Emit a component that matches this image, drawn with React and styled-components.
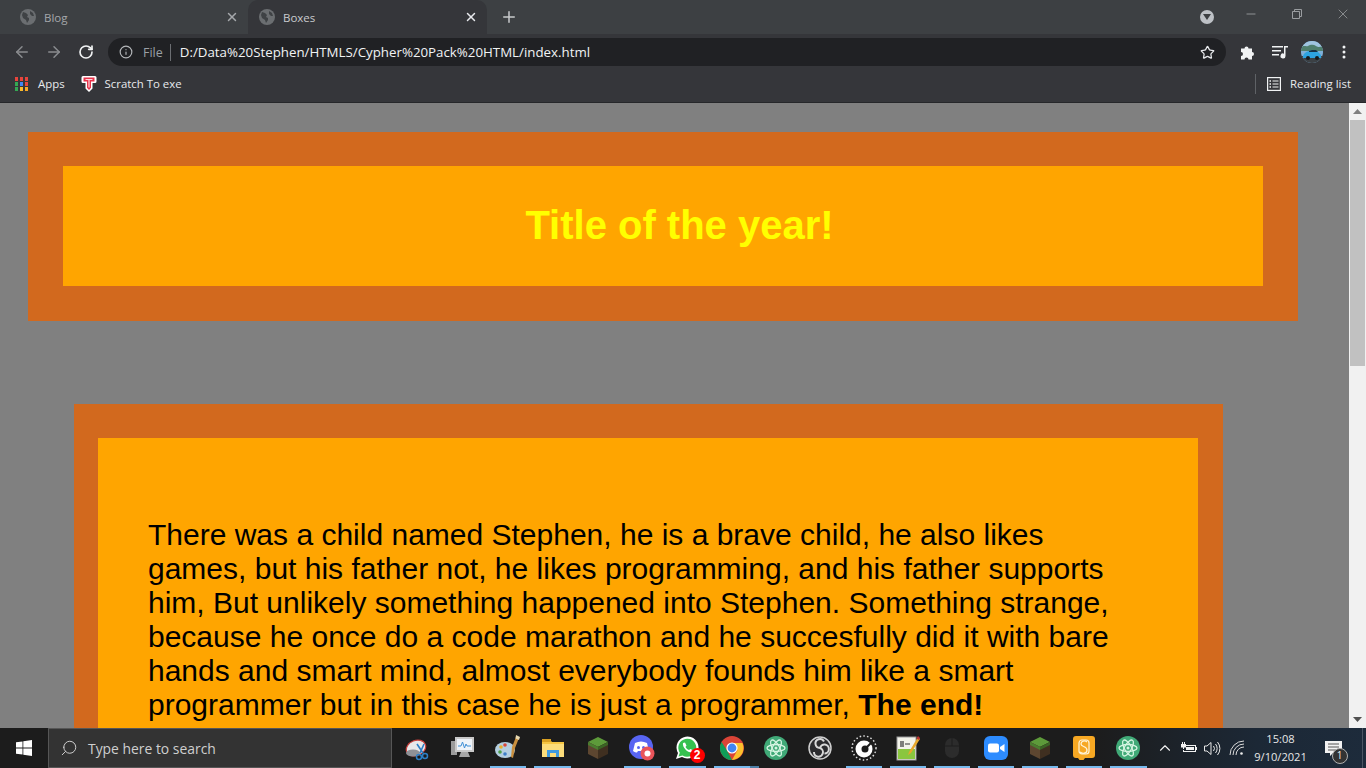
import React from 'react'
import styled, { createGlobalStyle } from 'styled-components'
import { ArrowLeft, ArrowRight, RotateCw, Star, Plus, X, Minus, Info, Search, ChevronUp } from 'lucide-react'

const Global = createGlobalStyle`
    html, body { margin: 0; padding: 0; height: 100%; overflow: hidden; }
    * { box-sizing: border-box; }
`

const Screen = styled.div`
    display: flex;
    flex-direction: column;
    width: 1366px;
    height: 768px;
    overflow: hidden;
    font-family: "Open Sans", "Noto Sans", sans-serif;
`

// browser chrome
const TabStrip = styled.div`
    display: flex;
    align-items: flex-end;
    height: 34px;
    background: #3d4043;
    flex-shrink: 0;
`

const Tab = styled.div`
    display: flex;
    align-items: center;
    width: ${p => p.$active ? 239 : 248}px;
    height: 34px;
    padding: ${p => p.$active ? '0 9px 0 11px' : '0 9px 0 20px'};
    gap: 8px;
    color: ${p => p.$active ? '#c9cbce' : '#a5a8ab'};
    background: ${p => p.$active ? '#35363a' : 'transparent'};
    border-radius: ${p => p.$active ? '10px 10px 0 0' : '0'};
    font-size: 11.5px;
`

const TabTitle = styled.span`
    flex: 1;
`

const NewTab = styled.div`
    display: flex;
    align-items: center;
    justify-content: center;
    width: 44px;
    height: 34px;
    color: #c8cacc;
`

const WindowControls = styled.div`
    display: flex;
    align-items: center;
    margin-left: auto;
    height: 34px;
    color: #9a9da0;
`

const ProfileDrop = styled.div`
    display: flex;
    align-items: center;
    justify-content: center;
    width: 14px;
    height: 14px;
    margin-right: 14px;
    border-radius: 50%;
    background: #bdc1c6;
`

const WinBtn = styled.div`
    display: flex;
    align-items: center;
    justify-content: center;
    width: 46px;
    height: 30px;
    margin-bottom: 6px;
`

const Toolbar = styled.div`
    display: flex;
    align-items: center;
    height: 34px;
    padding: 2px 0 0 6px;
    background: #35363a;
    flex-shrink: 0;
`

const NavBtn = styled.div`
    display: flex;
    align-items: center;
    justify-content: center;
    width: 32px;
    color: ${p => p.$on ? '#f1f3f4' : '#8a8c8f'};
`

const AddressBar = styled.div`
    display: flex;
    align-items: center;
    width: 1118px;
    height: 28px;
    margin-left: 6px;
    padding: 0 11px;
    border-radius: 14px;
    background: #202124;
    font-size: 13.3px;
`

const FileLabel = styled.span`
    margin-left: 10px;
    padding-right: 7px;
    color: #9aa0a6;
    border-right: 1px solid #6b6e72;
    font-size: 12.5px;
    line-height: 17px;
`

const Url = styled.span`
    flex: 1;
    margin-left: 9px;
    color: #f1f3f4;
`

const ToolIcons = styled.div`
    display: flex;
    align-items: center;
    padding-left: 6px;
    color: #f1f3f4;
`

const ToolSlot = styled.div`
    display: flex;
    align-items: center;
    justify-content: center;
    width: 32px;
`

const Avatar = styled.svg`
    display: block;
    border-radius: 50%;
`

const Bookmarks = styled.div`
    display: flex;
    align-items: center;
    height: 35px;
    padding: 0 0 3px 15px;
    background: #35363a;
    border-bottom: 1px solid #26272a;
    color: #e8eaed;
    font-size: 11.4px;
    flex-shrink: 0;
`

const Bookmark = styled.div`
    display: flex;
    align-items: center;
    gap: ${p => p.$gap}px;
    margin-right: 16px;
`

const ReadingList = styled.div`
    display: flex;
    align-items: center;
    gap: 9px;
    margin-left: auto;
    height: 20px;
    padding: 0 15px 0 11px;
    border-left: 1px solid #5f6266;
`

// page
const Viewport = styled.div`
    display: flex;
    flex: 1;
    min-height: 0;
`

const Page = styled.div`
    flex: 1;
    padding-top: 29px;
    overflow: hidden;
    background: #808080;
    font-family: "Liberation Sans", Arial, sans-serif;
`

const Header = styled.header`
    width: 1270px;
    margin-left: 28px;
    padding: 34px 35px 35px;
    background: #d2691e;
`

const TitleBox = styled.div`
    display: flex;
    align-items: center;
    justify-content: center;
    height: 120px;
    padding: 0 0 2px 33px;
    background: #ffa500;
`

const Title = styled.h1`
    margin: 0;
    color: #ffff00;
    font-size: 40px;
    font-weight: bold;
`

const Story = styled.section`
    width: 1149px;
    margin: 83px 0 0 74px;
    padding: 34px 25px 0 24px;
    background: #d2691e;
`

const StoryBox = styled.div`
    padding: 80px 50px 40px;
    background: #ffa500;
`

const StoryText = styled.p`
    margin: 0;
    color: #000;
    font-size: 30px;
    line-height: 34px;
`

const Scrollbar = styled.div`
    display: flex;
    flex-direction: column;
    align-items: center;
    width: 17px;
    background: #f1f1f1;
`

const ScrollArrow = styled.div`
    display: flex;
    align-items: center;
    justify-content: center;
    width: 17px;
    height: 17px;
    margin-top: ${p => p.$bottom ? 'auto' : '0'};
`

const ScrollThumb = styled.div`
    width: 15px;
    height: 246px;
    background: #c1c1c1;
`

// taskbar
const Taskbar = styled.footer`
    display: flex;
    align-items: center;
    height: 40px;
    background: linear-gradient(90deg, #1c1c1c 0%, #1c1c1c 80%, #1c2836 92%, #1d2b3b 100%);
    color: #fff;
    flex-shrink: 0;
`

const StartBtn = styled.div`
    display: flex;
    align-items: center;
    justify-content: center;
    width: 48px;
    height: 40px;
`

const SearchBox = styled.div`
    display: flex;
    align-items: center;
    gap: 10px;
    width: 344px;
    height: 40px;
    padding-left: 11px;
    background: #333;
    border: 1px solid #565656;
    color: #cfcfcf;
    font-size: 13.9px;
`

const Apps = styled.div`
    display: flex;
    margin-left: 4px;
    height: 40px;
`

const AppSlot = styled.div`
    position: relative;
    display: flex;
    align-items: center;
    justify-content: center;
    width: ${p => p.$wide ? 44.8 : 44.1}px;
    height: 40px;

    &::after {
        content: '';
        display: ${p => p.$running ? 'block' : 'none'};
        position: absolute;
        left: 4px;
        right: ${p => p.$stacked ? '-5px' : '4px'};
        bottom: 0;
        height: 2px;
        background: ${p => p.$stacked
            ? 'linear-gradient(90deg, #76b9ed 0, #76b9ed 36px, #4d7fa6 36px)'
            : '#76b9ed'};
    }
`

const Badge = styled.span`
    position: absolute;
    right: 5px;
    bottom: 5px;
    width: 15px;
    height: 15px;
    border-radius: 50%;
    background: #f00;
    color: #fff;
    font-family: "Liberation Sans", sans-serif;
    font-size: 12px;
    font-weight: bold;
    line-height: 15px;
    text-align: center;
`

const Tray = styled.div`
    display: flex;
    align-items: center;
    margin-left: 2px;
    color: #f2f2f2;
`

const TrayItem = styled.div`
    display: flex;
    align-items: center;
    justify-content: center;
    width: 24px;
`

const Clock = styled.div`
    width: 64px;
    color: #e8e8e8;
    font-size: 11.1px;
    line-height: 18px;
    text-align: center;
`

const Notify = styled.div`
    position: relative;
    display: flex;
    margin-left: 12px;
`

const NotifyCount = styled.span`
    position: absolute;
    left: 7px;
    top: 7px;
    width: 16px;
    height: 16px;
    border: 1.5px solid #b0b0b0;
    border-radius: 50%;
    background: #333;
    color: #eee;
    font-size: 10px;
    line-height: 13px;
    text-align: center;
`

const ShowDesktop = styled.div`
    width: 1px;
    height: 40px;
    margin-left: 20px;
    background: #4b5563;
`

const Globe = () => (
    <svg width="16" height="16" viewBox="0 0 16 16">
        <circle cx="8" cy="8" r="8" fill="#6b6e71" />
        <path d="M3 3l3 1 2 2-1 2 2 1 0 2-2 3-1-3-3-2-1-3zM10 2l3 2 1 3-2 0-2-2z" fill="#3f4245" />
    </svg>
)

const AppsGrid = () => {
    const colors = ['#e8453c', '#e8453c', '#e8453c', '#34a853', '#4285f4', '#e8453c', '#34a853', '#f9bb2d', '#f9a825']
    return (
        <svg width="13" height="14" viewBox="0 0 13 14">
            {colors.map((c, i) => (
                <rect key={i} x={(i % 3) * 5} y={Math.floor(i / 3) * 5} width="3" height="4" fill={c} />
            ))}
        </svg>
    )
}

const ScratchMark = () => (
    <svg width="16" height="18" viewBox="0 0 16 18">
        <path d="M2 1h12a1.500 1.500 0 0 1 1.500 1.500v4a1.500 1.500 0 0 1-1.500 1.500h-2.500v5.500L8 17l-3.500-3.500V8H2A1.500 1.500 0 0 1 .5 6.500v-4A1.500 1.500 0 0 1 2 1z" fill="#fff" />
        <path d="M2.500 2.500h11v4h-3.500v6.300L8 15l-2-2.200V6.500H2.500z" fill="#e8334a" />
        <path d="M4.500 4.500h7M8 4.500v8" stroke="#ffd4da" strokeWidth="1.200" fill="none" />
    </svg>
)

const Puzzle = () => (
    <svg width="16" height="16" viewBox="0 0 16 16" fill="currentColor">
        <path d="M1 4.500h3.500a2 2 0 1 1 4 0H12v3.500a2 2 0 1 1 0 4V15.500H8.500a2 2 0 1 0-4 0H1v-3.500a2 2 0 1 0 0-4z" />
    </svg>
)

const MediaQueue = () => (
    <svg width="16" height="14" viewBox="0 0 16 14" fill="currentColor">
        <rect x="0" y="1" width="11" height="1.500" />
        <rect x="0" y="5" width="9" height="1.500" />
        <rect x="0" y="9" width="7" height="1.500" />
        <path d="M12 1h4v1.500h-2.500V11a2.500 2.500 0 1 1-1.500-2.300z" />
    </svg>
)

const CarAvatar = () => (
    <Avatar width="22" height="22" viewBox="0 0 22 22">
        <rect width="22" height="22" fill="#7fb0d8" />
        <rect y="0" width="22" height="6" fill="#9fc4df" />
        <path d="M0 6c3-2 5 0 7-1s5-2 8 0 5 0 7 1v4H0z" fill="#4f7f6d" />
        <rect y="15" width="22" height="7" fill="#3b4044" />
        <path d="M2 15c1-3 3-4 6-5 3-1 7-1 9 1l3 3v3H2z" fill="#2da3e0" />
        <path d="M8 10l3-1h4l2 2H8z" fill="#173247" />
        <circle cx="7" cy="17" r="2" fill="#15191c" />
        <circle cx="16" cy="17" r="2" fill="#15191c" />
    </Avatar>
)

const ListIcon = () => (
    <svg width="14" height="14" viewBox="0 0 14 14" fill="none" stroke="#f1f3f4" strokeWidth="1.200">
        <rect x=".6" y=".6" width="12.800" height="12.800" />
        <path d="M5.500 4h6M5.500 7h6M5.500 10h6" />
        <path d="M2.500 4h1.500M2.500 7h1.500M2.500 10h1.500" strokeWidth="1.600" />
    </svg>
)

const RestoreIcon = () => (
    <svg width="10" height="10" viewBox="0 0 10 10" fill="none" stroke="currentColor">
        <path d="M.5 2.500h7v7h-7zM2.500 2.500v-2h7v7h-2" />
    </svg>
)

const WindowsLogo = () => (
    <svg width="16" height="16" viewBox="0 0 16 16" fill="#fff">
        <path d="M0 2.300l6.500-.9v6.200H0zM7.300 1.300L16 0v7.600H7.300zM0 8.400h6.500v6.200L0 13.700zM7.300 8.400H16V16l-8.700-1.200z" />
    </svg>
)

const SnipIcon = () => (
    <svg width="26" height="26" viewBox="0 0 26 26">
        <ellipse cx="11" cy="13" rx="10" ry="7.500" transform="rotate(-22 11 13)" fill="#e8e8ea" stroke="#c9403d" strokeWidth="1.200" />
        <ellipse cx="8" cy="18" rx="7" ry="3.500" fill="#8f9196" />
        <path d="M12 9l6 9M19 9l-4 9" stroke="#2d7fc6" strokeWidth="1.600" />
        <circle cx="20" cy="21" r="2.500" fill="none" stroke="#2d7fc6" strokeWidth="1.500" />
        <circle cx="14" cy="22" r="2.500" fill="none" stroke="#2d7fc6" strokeWidth="1.500" />
    </svg>
)

const MonitorIcon = () => (
    <svg width="24" height="24" viewBox="0 0 24 24">
        <rect x="0" y="5" width="6" height="14" fill="#9c9c9c" />
        <rect x="4" y="1" width="19" height="15" fill="#c9c9c9" />
        <rect x="6" y="3" width="15" height="11" fill="#eef3f8" />
        <path d="M7 10l3 0 1.500-4 2 6 1.500-4 1 2h4" fill="none" stroke="#3f8fd6" strokeWidth="1" />
        <path d="M10 16h7l2 5H8z" fill="#a6a6a6" />
    </svg>
)

const PaintIcon = () => (
    <svg width="26" height="26" viewBox="0 0 26 26">
        <ellipse cx="10" cy="15" rx="10" ry="8" fill="#b4cfe0" />
        <circle cx="6" cy="12" r="1.800" fill="#e8b02c" />
        <circle cx="10" cy="10" r="1.800" fill="#d8473c" />
        <circle cx="5" cy="17" r="1.800" fill="#4f9e4a" />
        <circle cx="10" cy="19" r="1.800" fill="#3d7fc9" />
        <path d="M21 2l3 1-4 10-2 10-2-1 1-10z" fill="#c98f3e" />
        <path d="M21 0l4 2-1 3-3.500-1.500z" fill="#e8d9b0" />
    </svg>
)

const FolderIcon = () => (
    <svg width="24" height="22" viewBox="0 0 24 22">
        <path d="M1 3h8l2 2h12v15H1z" fill="#f5c542" />
        <rect x="1" y="2" width="9" height="3" fill="#d9a021" />
        <rect x="1" y="7" width="22" height="13" fill="#fbdc7a" />
        <path d="M6 20v-7h12v7h-3v-4H9v4z" fill="#3f9ae0" />
    </svg>
)

const GrassBlock = () => (
    <svg width="24" height="24" viewBox="0 0 24 24">
        <path d="M12 1l10 5-10 5L2 6z" fill="#5d9a3a" />
        <path d="M2 6l10 5v12L2 18z" fill="#5d4630" />
        <path d="M22 6l-10 5v12l10-5z" fill="#3f2f20" />
        <path d="M2 6l10 5v3L2 9z" fill="#4a7d2f" />
        <path d="M22 6l-10 5v3l10-5z" fill="#3a6324" />
    </svg>
)

const DiscordIcon = () => (
    <svg width="26" height="26" viewBox="0 0 26 26">
        <circle cx="12" cy="12" r="12" fill="#5865f2" />
        <path d="M6 8c4-2 8-2 12 0l2 8c-1.500 1-3 1.500-4 1.500l-1-1.500H9l-1 1.500C7 17.500 5.500 17 4 16z" fill="#fff" />
        <circle cx="9.500" cy="12.500" r="1.500" fill="#5865f2" />
        <circle cx="14.500" cy="12.500" r="1.500" fill="#5865f2" />
        <circle cx="18.500" cy="18.500" r="7" fill="#e9545a" />
        <circle cx="18.500" cy="18.500" r="3" fill="#fff" />
    </svg>
)

const WhatsappIcon = () => (
    <svg width="24" height="24" viewBox="0 0 24 24">
        <path d="M1 23l2-6a11 11 0 1 1 4 4z" fill="#fff" />
        <path d="M3.500 20.500l1.300-3.800a9 9 0 1 1 2.800 2.700z" fill="#35c14f" />
        <path d="M8 7l2-.5 1.500 3-1 1.500c1 1.500 2 2.500 3.500 3l1.500-1 3 1.500-.5 2c-5 1-11-5-10-9.500z" fill="#fff" />
    </svg>
)

const ChromeIcon = () => (
    <svg width="24" height="24" viewBox="0 0 24 24">
        <circle cx="12" cy="12" r="12" fill="#db4437" />
        <path d="M12 24A12 12 0 0 1 1.600 6L7 14.500 12 24z" fill="#0f9d58" />
        <path d="M12 24l5.500-10L12 7h10.400A12 12 0 0 1 12 24z" fill="#fbc02d" />
        <circle cx="12" cy="12" r="5.600" fill="#fff" />
        <circle cx="12" cy="12" r="4.400" fill="#4285f4" />
    </svg>
)

const AtomIcon = () => (
    <svg width="24" height="24" viewBox="0 0 24 24">
        <circle cx="12" cy="12" r="12" fill="#40a977" />
        <g fill="none" stroke="#d5f5e2" strokeWidth="1.300">
            <ellipse cx="12" cy="12" rx="9" ry="3.500" />
            <ellipse cx="12" cy="12" rx="9" ry="3.500" transform="rotate(60 12 12)" />
            <ellipse cx="12" cy="12" rx="9" ry="3.500" transform="rotate(120 12 12)" />
        </g>
        <circle cx="12" cy="12" r="1.500" fill="#d5f5e2" />
    </svg>
)

const ObsIcon = () => (
    <svg width="24" height="24" viewBox="0 0 24 24">
        <circle cx="12" cy="12" r="11" fill="#2b2b2e" stroke="#cfcfcf" strokeWidth="1.500" />
        <g fill="none" stroke="#d8d8d8" strokeWidth="2">
            <path d="M12 12a4.500 4.500 0 1 1 4-6.500" />
            <path d="M12 12a4.500 4.500 0 1 1-6 4" />
            <path d="M12 12a4.500 4.500 0 1 1 4.500 5.500" />
        </g>
    </svg>
)

const DialIcon = () => (
    <svg width="26" height="26" viewBox="0 0 26 26">
        <circle cx="13" cy="13" r="12" fill="none" stroke="#ddd" strokeWidth="1.500" strokeDasharray="1.500 2.200" />
        <circle cx="13" cy="14" r="8.500" fill="#fff" />
        <circle cx="14" cy="14" r="3.500" fill="#1c1c1c" />
        <path d="M14 14l7-7" stroke="#1c1c1c" strokeWidth="2" />
    </svg>
)

const NotepadIcon = () => (
    <svg width="24" height="26" viewBox="0 0 24 26">
        <rect x="1" y="2" width="19" height="23" fill="#f3f3ea" stroke="#9a9a9a" />
        <rect x="2" y="14" width="17" height="10" fill="#8ac63f" />
        <path d="M5 6v6M7 6v6M9 9h5" stroke="#333" strokeWidth="1.200" />
        <path d="M22 2l-9 15-1 3 3-2 9-14z" fill="#e8a82c" />
        <path d="M22 1l2 2-1 2-2.500-1.500z" fill="#b33" />
    </svg>
)

const MouseIcon = () => (
    <svg width="14" height="20" viewBox="0 0 14 20">
        <rect x="0" y="0" width="14" height="20" rx="7" fill="#2c2c2c" />
        <path d="M0 8h14M7 0v8" stroke="#1c1c1c" />
    </svg>
)

const ZoomIcon = () => (
    <svg width="24" height="24" viewBox="0 0 24 24">
        <rect width="24" height="24" rx="6" fill="#2d8cff" />
        <rect x="4" y="7.500" width="11" height="9" rx="2" fill="#fff" />
        <path d="M16 11l4.500-3v8L16 13z" fill="#fff" />
    </svg>
)

const ScratchApp = () => (
    <svg width="22" height="25" viewBox="0 0 22 25">
        <path d="M3 0h16a3 3 0 0 1 3 3v16a3 3 0 0 1-3 3h-7l-1.500 2h-4L5 22H3a3 3 0 0 1-3-3V3a3 3 0 0 1 3-3z" fill="#f7a823" />
        <path d="M14 6c-2-2-6-1-6 2s6 2 6 6-5 4-7 2" fill="none" stroke="#fff3d6" strokeWidth="1.300" />
        <rect x="6" y="4" width="10" height="14" rx="3" fill="none" stroke="#fff3d6" strokeWidth="1.200" />
    </svg>
)

const BatteryIcon = () => (
    <svg width="16" height="12" viewBox="0 0 16 12" fill="#f2f2f2">
        <path d="M1 0h1v2h1V0h1v2h1v3.500H3v1.500H2V5.500H0V2h1z" />
        <path d="M4 3h11v2h1v3h-1v2H2V8h1v1h11V4H4z" />
        <rect x="5" y="5" width="8" height="3" />
    </svg>
)

const SpeakerIcon = () => (
    <svg width="17" height="15" viewBox="0 0 17 15" fill="none" stroke="#e8e8e8" strokeWidth="1">
        <path d="M.5 5h2.500L7 1.500v12L3 10H.5z" />
        <path d="M9.500 5a4 4 0 0 1 0 5M11.500 3a7 7 0 0 1 0 9M13.500 1a10 10 0 0 1 0 13" />
    </svg>
)

const WifiIcon = () => (
    <svg width="16" height="16" viewBox="0 0 16 16" fill="none" stroke="#d9d9d9" strokeWidth="1">
        <path d="M1 15A14 14 0 0 1 15 1M4 15A11 11 0 0 1 15 4M7 15A8 8 0 0 1 15 7" />
        <circle cx="12.500" cy="13.500" r="1.300" fill="#eee" stroke="none" />
    </svg>
)

const apps = [
    { key: 'snip', icon: <SnipIcon />, wide: true },
    { key: 'monitor', icon: <MonitorIcon />, wide: true },
    { key: 'paint', icon: <PaintIcon />, wide: true, running: true },
    { key: 'folder', icon: <FolderIcon />, wide: true, running: true },
    { key: 'mc', icon: <GrassBlock />, wide: true },
    { key: 'discord', icon: <DiscordIcon />, wide: true, running: true },
    { key: 'wa', icon: <WhatsappIcon />, wide: true, running: true, badge: '2' },
    { key: 'chrome', icon: <ChromeIcon />, running: true, stacked: true },
    { key: 'atom', icon: <AtomIcon /> },
    { key: 'obs', icon: <ObsIcon /> },
    { key: 'dial', icon: <DialIcon />, running: true },
    { key: 'notepad', icon: <NotepadIcon />, running: true },
    { key: 'mouse', icon: <MouseIcon />, running: true },
    { key: 'zoom', icon: <ZoomIcon />, running: true },
    { key: 'mc2', icon: <GrassBlock />, running: true },
    { key: 'scratch', icon: <ScratchApp />, running: true },
    { key: 'atom2', icon: <AtomIcon />, running: true },
]

const App = () => (
    <Screen>
        <Global />
        <TabStrip>
            <Tab>
                <Globe />
                <TabTitle>Blog</TabTitle>
                <X size={14} strokeWidth={2.5} />
            </Tab>
            <Tab $active>
                <Globe />
                <TabTitle>Boxes</TabTitle>
                <X size={14} strokeWidth={2.5} color="#e8eaed" />
            </Tab>
            <NewTab><Plus size={18} strokeWidth={2} /></NewTab>
            <WindowControls>
                <ProfileDrop>
                    <svg width="8" height="6" viewBox="0 0 8 6"><path d="M0 0h8L4 6z" fill="#3d4043" /></svg>
                </ProfileDrop>
                <WinBtn><Minus size={14} strokeWidth={1.500} /></WinBtn>
                <WinBtn><RestoreIcon /></WinBtn>
                <WinBtn><X size={16} strokeWidth={1.200} /></WinBtn>
            </WindowControls>
        </TabStrip>
        <Toolbar>
            <NavBtn><ArrowLeft size={18} /></NavBtn>
            <NavBtn><ArrowRight size={18} /></NavBtn>
            <NavBtn $on><RotateCw size={16} strokeWidth={2.5} /></NavBtn>
            <AddressBar>
                <Info size={14} color="#b4b7ba" />
                <FileLabel>File</FileLabel>
                <Url>D:/Data%20Stephen/HTMLS/Cypher%20Pack%20HTML/index.html</Url>
                <Star size={15} color="#e8eaed" />
            </AddressBar>
            <ToolIcons>
                <ToolSlot><Puzzle /></ToolSlot>
                <ToolSlot><MediaQueue /></ToolSlot>
                <ToolSlot><CarAvatar /></ToolSlot>
                <ToolSlot>
                    <svg width="4" height="14" viewBox="0 0 4 14" fill="#f1f3f4">
                        <circle cx="2" cy="2" r="1.500" />
                        <circle cx="2" cy="7" r="1.500" />
                        <circle cx="2" cy="12" r="1.500" />
                    </svg>
                </ToolSlot>
            </ToolIcons>
        </Toolbar>
        <Bookmarks>
            <Bookmark $gap={10}><AppsGrid />Apps</Bookmark>
            <Bookmark $gap={8}><ScratchMark />Scratch To exe</Bookmark>
            <ReadingList><ListIcon />Reading list</ReadingList>
        </Bookmarks>
        <Viewport>
            <Page>
                <Header>
                    <TitleBox>
                        <Title>Title of the year!</Title>
                    </TitleBox>
                </Header>
                <Story>
                    <StoryBox>
                        <StoryText>
                            There was a child named Stephen, he is a brave child, he also likes games, but his father not, he likes programming, and his father supports him, But unlikely something happened into Stephen. Something strange, because he once do a code marathon and he succesfully did it with bare hands and smart mind, almost everybody founds him like a smart programmer but in this case he is just a programmer, <b>The end!</b>
                        </StoryText>
                    </StoryBox>
                </Story>
            </Page>
            <Scrollbar>
                <ScrollArrow>
                    <svg width="9" height="5" viewBox="0 0 9 5"><path d="M0 5h9L4.500 0z" fill="#7f7f7f" /></svg>
                </ScrollArrow>
                <ScrollThumb />
                <ScrollArrow $bottom>
                    <svg width="9" height="5" viewBox="0 0 9 5"><path d="M0 0h9L4.500 5z" fill="#505050" /></svg>
                </ScrollArrow>
            </Scrollbar>
        </Viewport>
        <Taskbar>
            <StartBtn><WindowsLogo /></StartBtn>
            <SearchBox>
                <Search size={18} strokeWidth={1.300} style={{ transform: 'scaleX(-1)' }} />
                Type here to search
            </SearchBox>
            <Apps>
                {apps.map(a => (
                    <AppSlot key={a.key} $wide={a.wide} $running={a.running} $stacked={a.stacked}>
                        {a.icon}
                        {a.badge && <Badge>{a.badge}</Badge>}
                    </AppSlot>
                ))}
            </Apps>
            <Tray>
                <TrayItem><ChevronUp size={18} strokeWidth={1.500} /></TrayItem>
                <TrayItem><BatteryIcon /></TrayItem>
                <TrayItem><SpeakerIcon /></TrayItem>
                <TrayItem><WifiIcon /></TrayItem>
                <Clock>15:08<br />9/10/2021</Clock>
                <Notify>
                    <svg width="17" height="15" viewBox="0 0 17 15" fill="#f2f2f2">
                        <path d="M0 0h17v12H8l-3 3v-3H0z" />
                        <path d="M3 3h11M3 6h11M3 9h8" stroke="#555" strokeWidth="1" />
                    </svg>
                    <NotifyCount>1</NotifyCount>
                </Notify>
                <ShowDesktop />
            </Tray>
        </Taskbar>
    </Screen>
)

export default App
